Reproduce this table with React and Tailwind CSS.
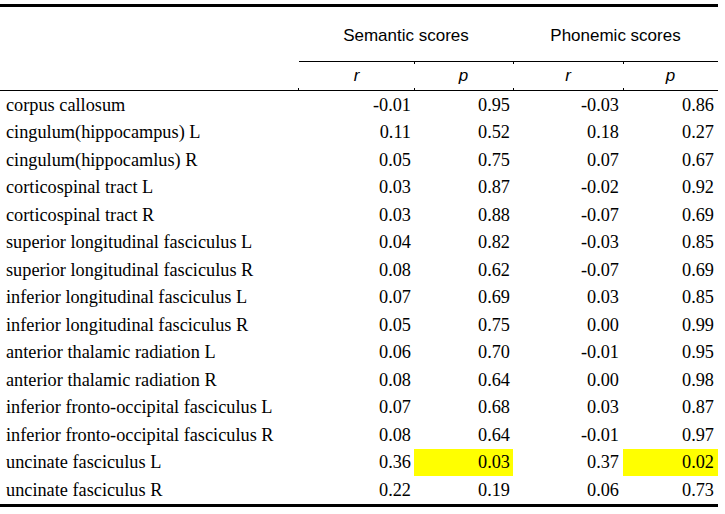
const rows = [
  ['corpus callosum', '-0.01', '0.95', '-0.03', '0.86'],
  ['cingulum(hippocampus) L', '0.11', '0.52', '0.18', '0.27'],
  ['cingulum(hippocamlus) R', '0.05', '0.75', '0.07', '0.67'],
  ['corticospinal tract L', '0.03', '0.87', '-0.02', '0.92'],
  ['corticospinal tract R', '0.03', '0.88', '-0.07', '0.69'],
  ['superior longitudinal fasciculus L', '0.04', '0.82', '-0.03', '0.85'],
  ['superior longitudinal fasciculus R', '0.08', '0.62', '-0.07', '0.69'],
  ['inferior longitudinal fasciculus L', '0.07', '0.69', '0.03', '0.85'],
  ['inferior longitudinal fasciculus R', '0.05', '0.75', '0.00', '0.99'],
  ['anterior thalamic radiation L', '0.06', '0.70', '-0.01', '0.95'],
  ['anterior thalamic radiation R', '0.08', '0.64', '0.00', '0.98'],
  ['inferior fronto-occipital fasciculus L', '0.07', '0.68', '0.03', '0.87'],
  ['inferior fronto-occipital fasciculus R', '0.08', '0.64', '-0.01', '0.97'],
  ['uncinate fasciculus L', '0.36', '0.03', '0.37', '0.02', true],
  ['uncinate fasciculus R', '0.22', '0.19', '0.06', '0.73'],
]

const cols = 'grid-cols-[299px_115px_99px_110px_95px]'

function Tick({ up }) {
  return (
    <span
      className={
        up
          ? 'absolute left-0 bottom-0 w-px h-[2px] bg-black'
          : 'absolute left-0 top-0 w-px h-[2px] bg-black'
      }
    />
  )
}

export default function App() {
  return (
    <div className="w-[725px] h-[514px] bg-white pt-[4px] text-black">
      <div className="w-[718px] border-t-[3px] border-b-[3px] border-black">
        {/* header groups */}
        <div className={`grid ${cols} h-[55px] font-['Liberation_Sans',Arial,sans-serif] text-[17px]`}>
          <div />
          <div className="col-span-2 flex items-center justify-center pt-[3px] border-b border-black">
            Semantic scores
          </div>
          <div className="col-span-2 flex items-center justify-center pt-[3px] border-b border-black">
            Phonemic scores
          </div>
        </div>

        {/* r / p */}
        <div className={`grid ${cols} h-[29px] border-b border-black font-['Liberation_Sans',Arial,sans-serif] text-[17px] italic`}>
          <div className="relative">
            <span className="absolute right-0 bottom-0 w-px h-[2px] bg-black" />
          </div>
          {['r', 'p', 'r', 'p'].map((s, i) => (
            <div key={i} className="relative flex items-center justify-center">
              {i > 0 && <Tick />}
              {i > 0 && <Tick up />}
              {s}
            </div>
          ))}
        </div>

        {/* body */}
        <div className={`grid ${cols} grid-rows-[repeat(15,minmax(0,1fr))] h-[413px] font-['Liberation_Serif','Times_New_Roman',serif] text-[18.3px]`}>
          {rows.map((r) => (
            <div key={r[0]} className="contents">
              <div className="flex items-center pt-[1px] pl-[6px] whitespace-nowrap">{r[0]}</div>
              <div className="flex items-center justify-end pt-[1px] pr-[3px]">{r[1]}</div>
              <div className={`flex items-center justify-end pt-[1px] pr-[3px] ${r[5] ? 'bg-[#ffff00]' : ''}`}>{r[2]}</div>
              <div className="flex items-center justify-end pt-[1px] pr-[4px]">{r[3]}</div>
              <div className={`flex items-center justify-end pt-[1px] pr-[4px] ${r[5] ? 'bg-[#ffff00]' : ''}`}>{r[4]}</div>
            </div>
          ))}
        </div>
      </div>
    </div>
  )
}
